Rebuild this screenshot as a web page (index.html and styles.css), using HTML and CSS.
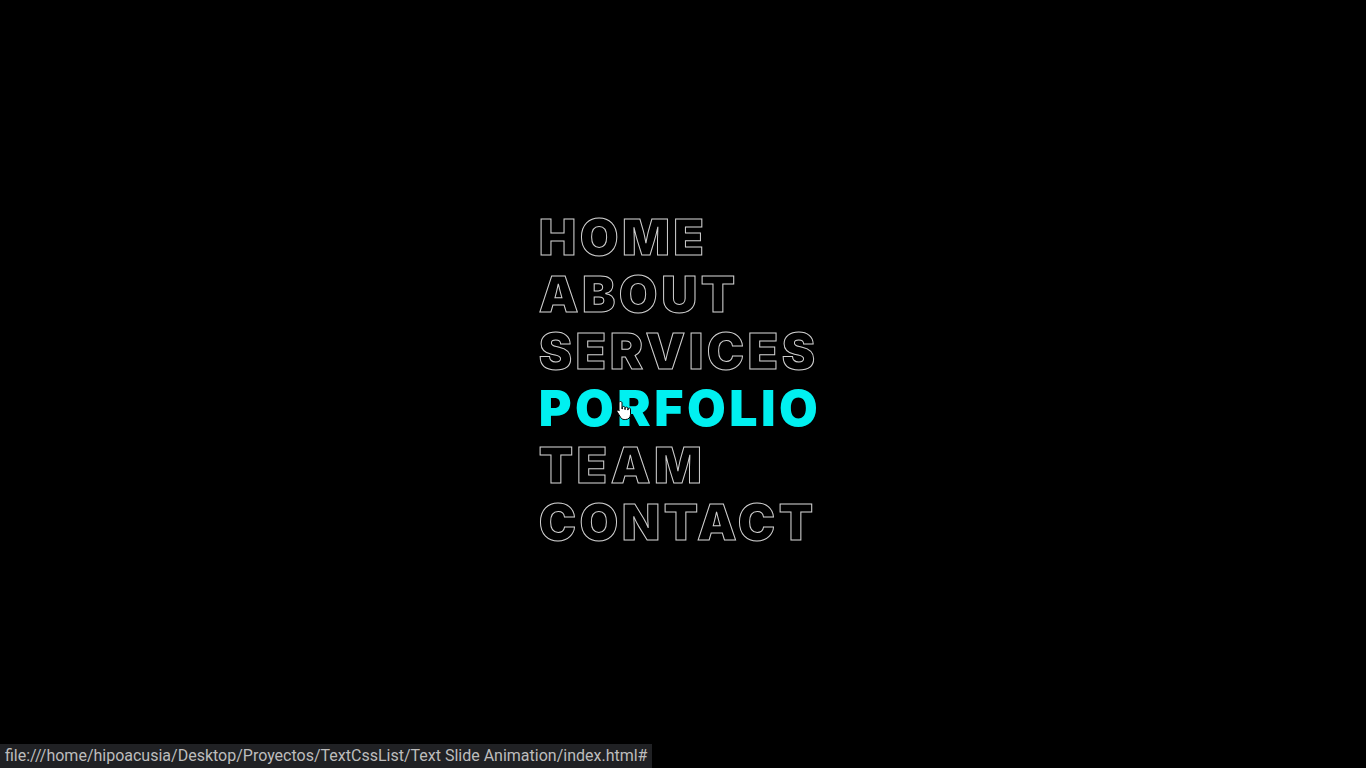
FILE: index.html
```html
<!DOCTYPE html>
<html lang="en">
<head>
<meta charset="utf-8">
<title>Text Slide Animation</title>
<link rel="stylesheet" href="styles.css">
</head>
<body>
<main class="stage">
  <ul class="menu">
    <li><a href="#">HOME</a></li>
    <li><a href="#">ABOUT</a></li>
    <li><a href="#">SERVICES</a></li>
    <li class="active"><a href="#">PORFOLIO</a>
      <svg class="cursor" width="16" height="22" viewBox="0 0 16 22">
        <path d="M4.5 1.5c.8 0 1.5.6 1.5 1.4V9h.3V7.6c0-.7.6-1.2 1.3-1.2s1.3.5 1.3 1.2V9.5h.3V8.3c0-.7.6-1.2 1.3-1.2s1.3.5 1.3 1.2V10h.3v-.9c0-.7.6-1.1 1.2-1.1s1.2.4 1.2 1.1v5.4c0 2.8-2 5-4.8 5H8.2c-1.6 0-2.8-.8-3.6-2.1L1.2 11.8c-.4-.6-.2-1.3.4-1.6.6-.3 1.3-.1 1.6.5L3 11V2.9c0-.8.7-1.4 1.5-1.4z" fill="#fff" stroke="#000" stroke-width="1"/>
      </svg>
    </li>
    <li><a href="#">TEAM</a></li>
    <li><a href="#">CONTACT</a></li>
  </ul>
</main>
<div class="status">file:///home/hipoacusia/Desktop/Proyectos/TextCssList/Text Slide Animation/index.html#</div>
</body>
</html>
```
FILE: styles.css
```css
* { box-sizing: border-box; }
html, body { margin: 0; padding: 0; height: 100%; }
body {
  background: #000;
  font-family: Inter, "Liberation Sans", Arial, sans-serif;
  overflow: hidden;
}
.stage {
  height: 100%;
  display: flex;
  align-items: center;
  justify-content: center;
  padding-bottom: 8px;
}
.menu {
  list-style: none;
  margin: 0;
  padding: 0 6px 0 0;
}
.menu li {
  position: relative;
  line-height: 57px;
  height: 57px;
}
.menu a {
  display: block;
  text-decoration: none;
  font-size: 50px;
  font-weight: 900;
  letter-spacing: 3.5px;
  color: transparent;
  -webkit-text-stroke: 1px #d0d0d0;
}
.menu li.active a {
  color: #00f0f0;
  -webkit-text-stroke: 0;
}
.cursor {
  position: absolute;
  left: 77px;
  top: 20px;
}
.status {
  position: fixed;
  left: 0;
  bottom: 0;
  height: 24px;
  padding: 0 5px 0 5px;
  background: #202124;
  color: #bdbdbd;
  font-family: Roboto, "Liberation Sans", sans-serif;
  font-size: 16px;
  line-height: 24px;
  white-space: nowrap;
}
```
